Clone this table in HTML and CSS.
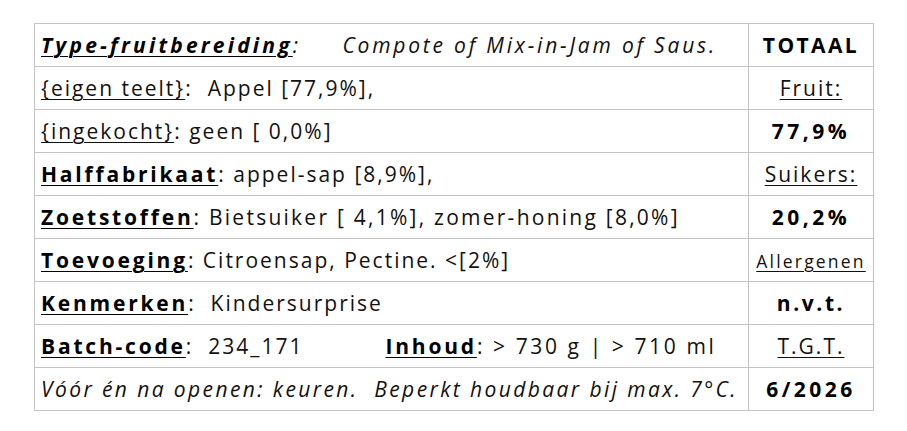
FILE: index.html
```html
<!DOCTYPE html>
<html lang="nl">
<head>
<meta charset="utf-8">
<link rel="stylesheet" href="styles.css">
</head>
<body>
<table class="label">
  <colgroup><col class="c-main"><col class="c-side"></colgroup>
  <tr>
    <td class="main"><span class="lbl-it">Type-fruitbereiding</span><span class="it">:</span><span class="it type-val">Compote of Mix-in-Jam of Saus.</span></td>
    <td class="side"><b class="totaal">TOTAAL</b></td>
  </tr>
  <tr>
    <td class="main"><u>{eigen teelt}</u>:&nbsp; Appel [77,9%],</td>
    <td class="side"><u>Fruit:</u></td>
  </tr>
  <tr>
    <td class="main"><u>{ingekocht}</u>: geen [ 0,0%]</td>
    <td class="side"><b class="num">77,9%</b></td>
  </tr>
  <tr>
    <td class="main"><b class="lbl">Halffabrikaat</b>: appel-sap [8,9%],</td>
    <td class="side"><u>Suikers:</u></td>
  </tr>
  <tr>
    <td class="main"><b class="lbl">Zoetstoffen</b><span class="wide">: Bietsuiker [ 4,1%], zomer-honing [8,0%]</span></td>
    <td class="side"><b class="num">20,2%</b></td>
  </tr>
  <tr>
    <td class="main"><b class="lbl">Toevoeging</b>: Citroensap, Pectine. &lt;[2%]</td>
    <td class="side"><u class="small">Allergenen</u></td>
  </tr>
  <tr>
    <td class="main"><b class="lbl">Kenmerken</b>:&nbsp; Kindersurprise</td>
    <td class="side"><b class="nvt">n.v.t.</b></td>
  </tr>
  <tr>
    <td class="main"><b class="lbl">Batch-code</b>:&nbsp; 234_171<span class="inhoud"><b class="lbl">Inhoud</b><span class="wider">: &gt; 730 g | &gt; 710 ml</span></span></td>
    <td class="side"><u>T.G.T.</u></td>
  </tr>
  <tr>
    <td class="main it">Vóór én na openen: keuren.&nbsp; Beperkt houdbaar bij max. 7°C.</td>
    <td class="side"><b class="num">6/2026</b></td>
  </tr>
</table>
</body>
</html>
```
FILE: styles.css
```css
html, body {
  margin: 0;
  background: #ffffff;
}
body {
  padding: 23px 34px;
  font-family: "Open Sans", "Noto Sans", sans-serif;
  font-size: 21px;
  color: #111111;
}
.label {
  border-collapse: collapse;
  width: 839px;
  height: 385px;
  table-layout: fixed;
}
.c-main { width: 714px; }
.c-side { width: 125px; }
td {
  border: 1px solid #c4c4c4;
  padding: 0 6px;
  height: 42px;
  white-space: nowrap;
  letter-spacing: 2px;
  vertical-align: middle;
}
.side {
  text-align: center;
  padding: 0;
}
u, .lbl, .lbl-it {
  text-decoration: underline;
  text-underline-offset: 3px;
  text-decoration-thickness: 1px;
}
.lbl {
  font-weight: 700;
  letter-spacing: 2.8px;
  color: #000;
}
.lbl-it {
  font-weight: 700;
  font-style: italic;
  letter-spacing: 3.2px;
  color: #000;
}
.it {
  font-style: italic;
  letter-spacing: 2.4px;
}
.type-val {
  margin-left: 42px;
  letter-spacing: 2.8px;
}
.wide {
  letter-spacing: 2.25px;
}
.wider {
  letter-spacing: 2.6px;
}
.totaal {
  font-weight: 700;
  letter-spacing: 2.4px;
  color: #000;
}
.num {
  font-weight: 700;
  letter-spacing: 3.5px;
  color: #000;
}
.nvt {
  font-weight: 700;
  letter-spacing: 2.6px;
  color: #000;
}
.small {
  font-size: 17.5px;
  letter-spacing: 2.2px;
}
.inhoud {
  margin-left: 82px;
}
```
